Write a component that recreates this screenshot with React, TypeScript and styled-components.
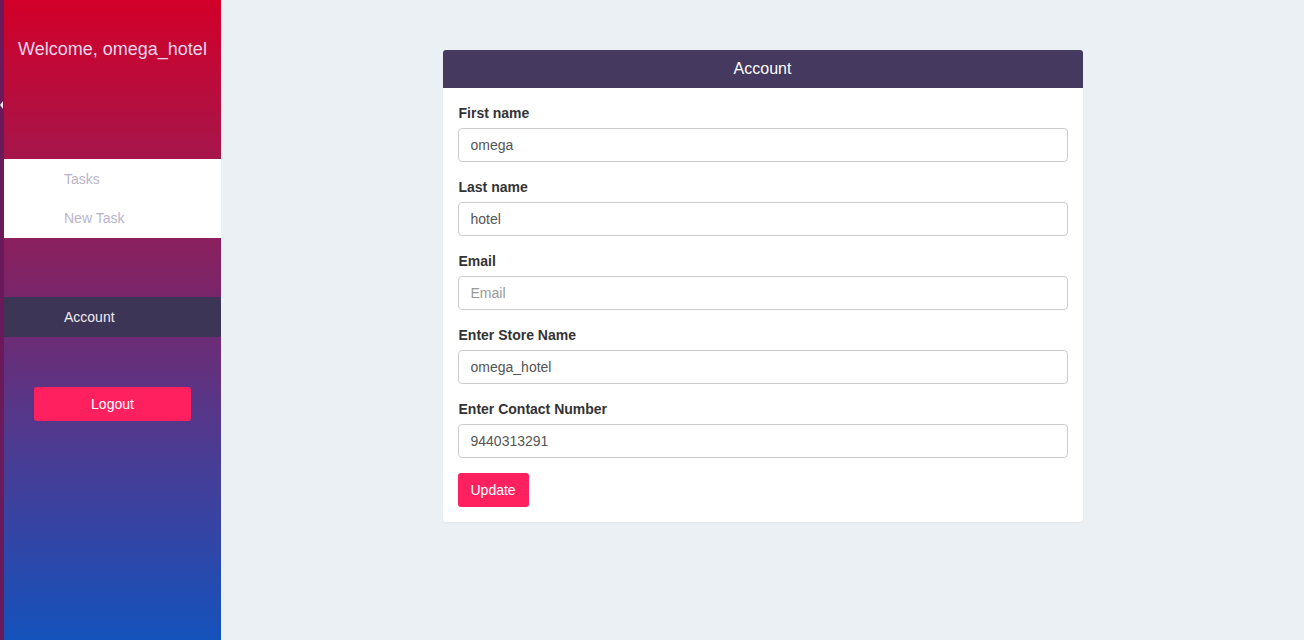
import React from "react";
import styled, { createGlobalStyle } from "styled-components";

const GlobalStyle = createGlobalStyle`
  html, body { margin: 0; padding: 0; }
  body {
    font-family: "Liberation Sans", Arial, sans-serif;
    background: #ebf0f4;
  }
  * { box-sizing: border-box; }
`;

const Layout = styled.div`
  display: flex;
  min-height: 640px;
`;

const Sidebar = styled.aside`
  position: relative;
  width: 221px;
  flex-shrink: 0;
  border-left: 4px solid #6a1a5b;
  background: linear-gradient(to bottom, #d20029 0%, #a5164b 25%, #7b2568 45%, #5a3585 62%, #3a42a0 80%, #1452bb 100%);
  display: flex;
  flex-direction: column;
`;

const EdgeArrow = styled.span`
  position: absolute;
  left: -4px;
  top: 101px;
  width: 0;
  height: 0;
  border-top: 4px solid transparent;
  border-bottom: 4px solid transparent;
  border-right: 3px solid #e8e8ee;
`;

const Welcome = styled.div`
  height: 159px;
  padding-top: 38px;
  text-align: center;
  font-size: 18px;
  line-height: 22px;
  color: #ecd6ec;
`;

const WhiteNav = styled.nav`
  background: #ffffff;
  display: flex;
  flex-direction: column;
  padding-bottom: 1px;
`;

const NavItem = styled.a<{ $active?: boolean }>`
  display: flex;
  align-items: center;
  height: ${(p) => (p.$active ? "40px" : "39px")};
  padding-left: 60px;
  font-size: 14px;
  text-decoration: none;
  color: ${(p) => (p.$active ? "#f0eaf4" : "#b9b5cc")};
  background: ${(p) => (p.$active ? "#3d3555" : "transparent")};
  border-radius: ${(p) => (p.$active ? "0 2px 2px 0" : "0")};
`;

const AccountNav = styled.div`
  margin-top: 59px;
  display: flex;
  flex-direction: column;
`;

const LogoutWrap = styled.div`
  margin-top: 50px;
  padding-left: 30px;
`;

const PinkButton = styled.button<{ $wide?: boolean }>`
  background: #ff2060;
  color: #ffffff;
  border: none;
  border-radius: 3px;
  height: 34px;
  width: ${(p) => (p.$wide ? "157px" : "auto")};
  padding: 0 13px;
  font-family: inherit;
  font-size: 14px;
  cursor: pointer;
`;

const Main = styled.main`
  flex: 1;
  display: flex;
  justify-content: center;
  padding-top: 50px;
`;

const Card = styled.section`
  width: 640px;
  align-self: flex-start;
  background: #ffffff;
  border-radius: 3px;
  overflow: hidden;
  box-shadow: 0 1px 2px rgba(0, 0, 0, 0.05);
`;

const CardHeader = styled.header`
  height: 38px;
  background: #453960;
  color: #ffffff;
  font-size: 16px;
  display: flex;
  align-items: center;
  justify-content: center;
`;

const CardBody = styled.form`
  padding: 15px;
  display: flex;
  flex-direction: column;
`;

const Field = styled.div`
  display: flex;
  flex-direction: column;
  margin-bottom: 15px;
`;

const Label = styled.label`
  font-size: 14px;
  font-weight: bold;
  line-height: 20px;
  color: #333333;
  margin-bottom: 5px;
  padding-left: 1px;
`;

const Input = styled.input`
  height: 34px;
  border: 1px solid #cccccc;
  border-radius: 4px;
  padding: 6px 12px;
  font-family: inherit;
  font-size: 14px;
  color: #555555;
  outline: none;
  &::placeholder { color: #999999; }
`;

const ButtonRow = styled.div`
  display: flex;
`;

const fields = [
  { label: "First name", value: "omega" },
  { label: "Last name", value: "hotel" },
  { label: "Email", value: "", placeholder: "Email" },
  { label: "Enter Store Name", value: "omega_hotel" },
  { label: "Enter Contact Number", value: "9440313291" },
];

export default function App() {
  return (
    <>
      <GlobalStyle />
      <Layout>
        <Sidebar>
          <EdgeArrow />
          <Welcome>Welcome, omega_hotel</Welcome>
          <WhiteNav>
            <NavItem href="#">Tasks</NavItem>
            <NavItem href="#">New Task</NavItem>
          </WhiteNav>
          <AccountNav>
            <NavItem $active href="#">Account</NavItem>
          </AccountNav>
          <LogoutWrap>
            <PinkButton $wide type="button">Logout</PinkButton>
          </LogoutWrap>
        </Sidebar>
        <Main>
          <Card>
            <CardHeader>Account</CardHeader>
            <CardBody onSubmit={(e) => e.preventDefault()}>
              {fields.map((f) => (
                <Field key={f.label}>
                  <Label>{f.label}</Label>
                  <Input defaultValue={f.value} placeholder={f.placeholder} />
                </Field>
              ))}
              <ButtonRow>
                <PinkButton type="submit">Update</PinkButton>
              </ButtonRow>
            </CardBody>
          </Card>
        </Main>
      </Layout>
    </>
  );
}
